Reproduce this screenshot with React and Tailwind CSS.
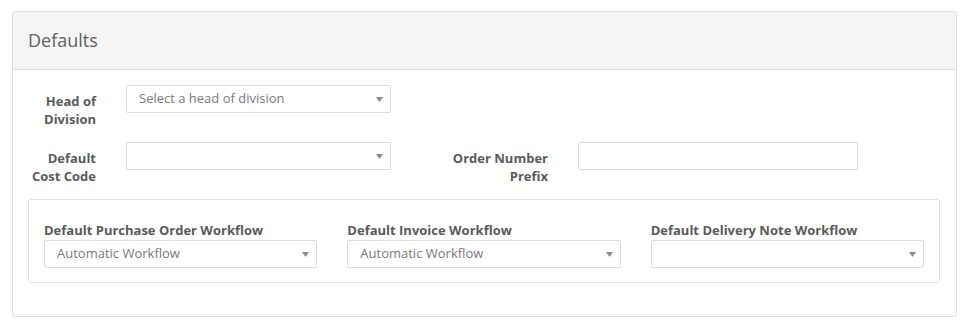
import React from 'react'

function Caret() {
    return (
        <svg width="7" height="5" viewBox="0 0 7 5" className="shrink-0">
            <path d="M0 0 L7 0 L3.5 5 Z" fill="#8a8a8a" />
        </svg>
    )
}

function Select({ value, className = "" }) {
    return (
        <div className={"h-[28px] border border-[#dcdcdc] rounded-[2px] bg-white flex items-center pl-[12px] pr-[7px] " + className}>
            <span className="flex-1 text-[13px] text-[#7a7a7a] truncate">{value}</span>
            <Caret />
        </div>
    )
}

function Label({ children, className = "" }) {
    return (
        <label className={"text-[13px] leading-[18px] font-bold text-[#5a5a5a] text-right pt-[7px] " + className}>
            {children}
        </label>
    )
}

export default function App() {
    return (
        <div className="w-[974px] h-[328px] bg-white pt-[11px] pl-[12px]" style={{ fontFamily: '"Open Sans", sans-serif' }}>
            <div className="w-[945px] h-[306px] border border-[#dddddd] rounded-[3px] overflow-hidden">
                <div className="h-[58px] bg-[#f5f5f5] border-b border-[#dddddd] flex items-center pl-[15px]">
                    <h3 className="text-[18px] text-[#5f5f5f] leading-none mb-[1px]">Defaults</h3>
                </div>
                <div className="pt-[15px]">
                    <div className="flex items-start ml-[13px]">
                        <Label className="w-[70px]">Head of Division</Label>
                        <Select value="Select a head of division" className="ml-[30px] w-[265px]" />
                    </div>
                    <div className="flex items-start ml-[13px] mt-[14px]">
                        <Label className="w-[70px]">Default Cost Code</Label>
                        <Select value="" className="ml-[30px] w-[265px]" />
                        <Label className="w-[110px] ml-[47px]">Order Number Prefix</Label>
                        <div className="ml-[30px] w-[280px] h-[28px] border border-[#dcdcdc] rounded-[2px]" />
                    </div>
                    <div className="ml-[15px] mr-[16px] mt-[14px] border border-[#dddddd] rounded-[3px] pt-[21px] pb-[14px] px-[15px] grid grid-cols-3 gap-x-[30px]">
                        {[
                            ["Default Purchase Order Workflow", "Automatic Workflow"],
                            ["Default Invoice Workflow", "Automatic Workflow"],
                            ["Default Delivery Note Workflow", ""],
                        ].map(([label, value]) => (
                            <div key={label}>
                                <div className="text-[13px] leading-[18px] font-bold text-[#5a5a5a] mb-[1px]">{label}</div>
                                <Select value={value} />
                            </div>
                        ))}
                    </div>
                </div>
            </div>
        </div>
    )
}
